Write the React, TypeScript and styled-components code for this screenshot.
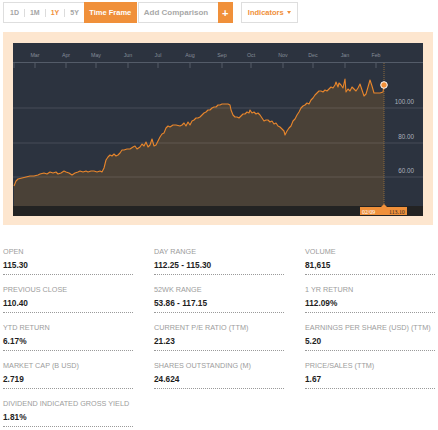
import React, { FC } from 'react';
import styled, { createGlobalStyle } from 'styled-components';

const GlobalStyle = createGlobalStyle`
  body {
    margin: 0;
    background: #fff;
    font-family: "Liberation Sans", Arial, sans-serif;
  }
`;

const ORANGE = '#f0903a';

const Page = styled.div`
  width: 438px;
  padding: 2px 0 0 3px;
  box-sizing: border-box;
`;

const Toolbar = styled.div`
  display: flex;
  align-items: stretch;
  height: 21px;
`;

const RangeGroup = styled.div`
  display: flex;
  align-items: center;
  border: 1px solid #dedede;
  border-right: none;
  padding-left: 1px;
`;

const RangeBtn = styled.span<{ $active?: boolean }>`
  padding: 0 5px;
  font-size: 7px;
  font-weight: 700;
  color: ${(p) => (p.$active ? ORANGE : '#a5a5a5')};
`;

const Sep = styled.span`
  width: 1px;
  height: 8px;
  background: #dcdcdc;
`;

const TimeFrameBtn = styled.div`
  display: flex;
  align-items: center;
  justify-content: center;
  width: 53px;
  background: ${ORANGE};
  color: #fff;
  font-size: 7.5px;
  font-weight: 700;
`;

const CompareBox = styled.div`
  display: flex;
  margin-left: 1px;
`;

const CompareInput = styled.div`
  display: flex;
  align-items: center;
  width: 74px;
  padding-left: 5px;
  border: 1px solid #dedede;
  border-right: none;
  font-size: 8px;
  font-weight: 700;
  color: #a8a8a8;
`;

const PlusBtn = styled.div`
  display: flex;
  align-items: center;
  justify-content: center;
  width: 15px;
  background: ${ORANGE};
  color: #fff;
  font-size: 11px;
  font-weight: 700;
`;

const IndicatorsBtn = styled.div`
  display: flex;
  align-items: center;
  gap: 3px;
  margin-left: 8px;
  padding: 0 6px;
  border: 1px solid #dedede;
  color: ${ORANGE};
  font-size: 7.5px;
  font-weight: 700;
`;

const Caret = styled.span`
  width: 0;
  height: 0;
  border-left: 2.5px solid transparent;
  border-right: 2.5px solid transparent;
  border-top: 3px solid ${ORANGE};
`;

const ChartFrame = styled.div`
  width: 430px;
  margin-top: 9px;
  padding: 11px 10px 9px 10px;
  box-sizing: border-box;
  background: #fde6cf;
`;

const ChartSvg = styled.svg`
  display: block;
`;

const StatsGrid = styled.div`
  display: grid;
  grid-template-columns: repeat(3, 130px);
  column-gap: 21px;
  row-gap: 10px;
  margin-top: 22px;
`;

const StatItem = styled.div`
  padding-bottom: 3px;
  border-bottom: 1px dotted #9a9a9a;
`;

const StatLabel = styled.div`
  font-size: 7.25px;
  line-height: 10px;
  color: #9c9c9c;
  text-transform: uppercase;
  white-space: nowrap;
  margin-bottom: 3px;
`;

const StatValue = styled.div`
  font-size: 8.3px;
  line-height: 11px;
  font-weight: 700;
  color: #1e1e1e;
`;

// page coords of the price line (chart origin sits at 13,43)
const raw: [number, number][] = [
  [14, 186], [16, 181], [18, 179], [22, 178], [26, 177], [30, 176], [34, 176], [38, 175], [40, 174],
  [44, 173], [47, 174], [50, 172], [53, 173], [56, 172], [58, 174], [61, 173], [64, 171], [66, 172],
  [69, 173], [72, 175], [75, 173], [78, 172], [80, 171], [83, 172], [86, 171], [88, 172], [91, 171],
  [94, 171], [97, 172], [100, 171], [102, 172], [104, 168], [106, 160], [108, 157], [110, 155],
  [112, 156], [114, 154], [116, 156], [118, 155], [120, 153], [122, 150], [124, 150], [127, 149],
  [130, 149], [133, 147], [135, 146], [137, 149], [140, 147], [142, 144], [144, 146], [146, 142],
  [148, 147], [150, 145], [152, 139], [154, 146], [156, 145], [158, 141], [160, 137], [162, 134],
  [164, 133], [166, 128], [168, 126], [170, 127], [173, 125], [176, 125], [180, 126], [182, 125],
  [184, 123], [186, 126], [188, 122], [190, 125], [192, 121], [194, 120], [196, 118], [198, 118],
  [200, 117], [202, 115], [204, 113], [206, 112], [208, 110], [210, 110], [212, 108], [214, 107],
  [216, 107], [218, 105], [220, 105], [222, 104], [225, 104], [228, 104], [230, 105], [231, 110],
  [233, 115], [235, 117], [237, 117], [239, 118], [241, 116], [243, 114], [245, 114], [247, 112],
  [249, 113], [250, 110], [252, 113], [254, 112], [256, 114], [258, 113], [260, 115], [262, 118],
  [264, 121], [266, 120], [268, 120], [270, 122], [272, 121], [274, 124], [276, 123], [278, 126],
  [280, 127], [282, 129], [284, 131], [285, 135], [287, 131], [289, 128], [291, 126], [293, 121],
  [295, 119], [297, 115], [299, 112], [301, 108], [303, 106], [305, 105], [307, 103], [309, 104],
  [311, 100], [313, 98], [315, 95], [317, 93], [319, 91], [321, 91], [323, 92], [325, 90], [327, 91],
  [329, 89], [331, 87], [333, 88], [335, 85], [336, 82], [338, 87], [339, 83], [341, 85], [343, 88],
  [345, 79], [346, 92], [348, 89], [350, 91], [352, 87], [354, 89], [356, 91], [358, 88], [360, 84],
  [362, 90], [364, 96], [366, 94], [368, 87], [370, 80], [372, 86], [374, 93], [377, 93], [380, 93],
  [383, 92], [384, 85],
];

const pts = raw.map(([x, y]) => [x - 13, y - 43]);
const linePath = pts.map(([x, y], i) => `${i ? 'L' : 'M'}${x} ${y}`).join(' ');
const fillPath = `${linePath} L${pts[pts.length - 1][0]} 163 L${pts[0][0]} 163 Z`;

const months = [
  ['Mar', 22], ['Apr', 53], ['May', 83], ['Jun', 115], ['Jul', 145], ['Aug', 177],
  ['Sep', 209], ['Oct', 238], ['Nov', 270], ['Dec', 300], ['Jan', 332], ['Feb', 363],
] as const;

const grid = [
  { y: 65, label: '100.00' },
  { y: 100, label: '80.00' },
  { y: 134, label: '60.00' },
];

const PriceChart: FC = () => (
  <ChartSvg width={410} height={173} viewBox="0 0 410 173">
    <rect width="410" height="173" fill="#2c333f" />
    <path d={fillPath} fill="#4a4137" />
    {grid.map((g) => (
      <g key={g.label}>
        <line x1="0" x2="410" y1={g.y} y2={g.y} stroke="rgba(255,255,255,0.13)" strokeWidth="1" />
        <text x="401" y={g.y - 4} fill="#aab1bc" fontSize="6.3" textAnchor="end" fontFamily="Liberation Sans, Arial, sans-serif">
          {g.label}
        </text>
      </g>
    ))}
    <line x1="0" x2="410" y1="19.5" y2="19.5" stroke="#545c69" strokeWidth="1" />
    <line x1="1" x2="1" y1="19" y2="25" stroke="#545c69" />
    {months.map(([m, x]) => (
      <g key={m}>
        <line x1={x} x2={x} y1="19" y2="25" stroke="#545c69" />
        <text x={x} y="14" fill="#858d99" fontSize="5.3" textAnchor="middle" fontFamily="Liberation Sans, Arial, sans-serif">
          {m}
        </text>
      </g>
    ))}
    <rect y="163" width="410" height="10" fill="#232323" />
    <line x1="371" x2="371" y1="20" y2="164" stroke="#8a6a3e" strokeWidth="1" strokeDasharray="1 1" />
    <path d={linePath} fill="none" stroke="#e8862c" strokeWidth="1.1" strokeLinejoin="round" />
    <circle cx="371" cy="42" r="3.3" fill="#f0903a" stroke="#fff" strokeWidth="1" />
    <path d="M368 164 L371 161 L374 164 Z" fill="#f0903a" />
    <rect x="347" y="164" width="47" height="8" fill="#f0903a" />
    <text x="349" y="170.5" fill="#fff" fontSize="5.8" fontFamily="Liberation Serif, serif">02/09</text>
    <text x="376" y="170.5" fill="#2a2a2a" fontSize="5.8" fontFamily="Liberation Serif, serif">113.10</text>
  </ChartSvg>
);

const stats = [
  ['Open', '115.30'],
  ['Day Range', '112.25 - 115.30'],
  ['Volume', '81,615'],
  ['Previous Close', '110.40'],
  ['52wk Range', '53.86 - 117.15'],
  ['1 Yr Return', '112.09%'],
  ['YTD Return', '6.17%'],
  ['Current P/E Ratio (TTM)', '21.23'],
  ['Earnings per Share (USD) (TTM)', '5.20'],
  ['Market Cap (B USD)', '2.719'],
  ['Shares Outstanding (M)', '24.624'],
  ['Price/Sales (TTM)', '1.67'],
  ['Dividend Indicated Gross Yield', '1.81%'],
];

const ranges = ['1D', '1M', '1Y', '5Y'];

const App: FC = () => (
  <>
    <GlobalStyle />
    <Page>
      <Toolbar>
        <RangeGroup>
          {ranges.map((r, i) => (
            <React.Fragment key={r}>
              {i > 0 && <Sep />}
              <RangeBtn $active={r === '1Y'}>{r}</RangeBtn>
            </React.Fragment>
          ))}
        </RangeGroup>
        <TimeFrameBtn>Time Frame</TimeFrameBtn>
        <CompareBox>
          <CompareInput>Add Comparison</CompareInput>
          <PlusBtn>+</PlusBtn>
        </CompareBox>
        <IndicatorsBtn>
          Indicators <Caret />
        </IndicatorsBtn>
      </Toolbar>
      <ChartFrame>
        <PriceChart />
      </ChartFrame>
      <StatsGrid>
        {stats.map(([label, value]) => (
          <StatItem key={label}>
            <StatLabel>{label}</StatLabel>
            <StatValue>{value}</StatValue>
          </StatItem>
        ))}
      </StatsGrid>
    </Page>
  </>
);

export default App;
